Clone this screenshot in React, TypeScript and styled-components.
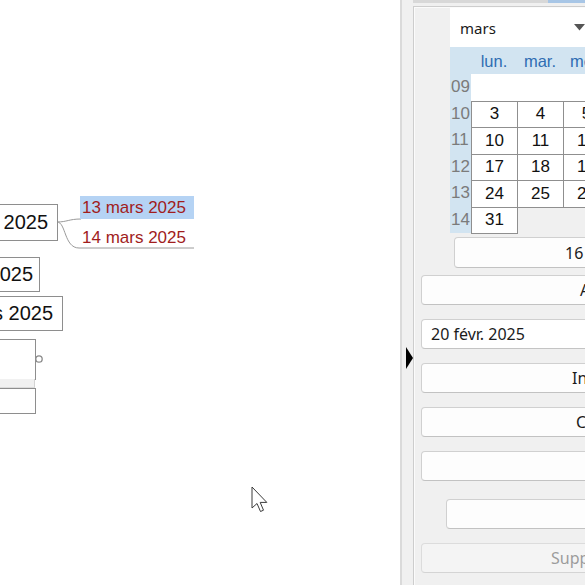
import React from 'react';
import styled, { createGlobalStyle } from 'styled-components';

const Global = createGlobalStyle`
  html, body { margin: 0; padding: 0; width: 585px; height: 585px; overflow: hidden; background: #fff; }
  #root { width: 585px; height: 585px; }
`;

const Page = styled.div`
  display: flex;
  width: 585px;
  height: 585px;
  overflow: hidden;
`;

/* ---------- mind map canvas ---------- */
const Canvas = styled.div`
  position: relative;
  flex: none;
  width: 400px;
  height: 100%;
  background: #fff;
  overflow: hidden;
  font-family: "Liberation Sans", Arial, sans-serif;
`;

const Node = styled.div<{ $right: number; $top: number; $h: number; $pad: number }>`
  position: absolute;
  right: ${p => 400 - p.$right}px;
  top: ${p => p.$top}px;
  height: ${p => p.$h}px;
  box-sizing: border-box;
  min-width: 120px;
  border: 1px solid #8e8e8e;
  background: #fff;
  padding: 0 ${p => p.$pad}px 0 10px;
  display: flex;
  align-items: center;
  justify-content: flex-end;
  font-size: 20px;
  color: #111;
  white-space: nowrap;
`;

const Strip = styled.div`
  position: absolute;
  right: 365px;
  top: 379px;
  width: 80px;
  height: 9px;
  box-sizing: border-box;
  background: #f1f1f1;
  border-right: 1px solid #d4d4d4;
  border-bottom: 1px solid #dcdcdc;
`;

const DateLabel = styled.div<{ $top: number; $selected?: boolean }>`
  position: absolute;
  left: 80px;
  top: ${p => p.$top}px;
  width: 114px;
  height: 23px;
  padding-left: 2px;
  box-sizing: border-box;
  display: flex;
  align-items: center;
  font-size: 17px;
  color: #a11d1d;
  background: ${p => (p.$selected ? '#b5d3f4' : 'transparent')};
  white-space: nowrap;
`;

const Overlay = styled.svg`
  position: absolute;
  left: 0;
  top: 0;
  width: 400px;
  height: 585px;
  pointer-events: none;
`;

const Cursor = styled.svg`
  position: absolute;
  left: 251px;
  top: 486px;
  width: 19px;
  height: 27px;
`;

/* ---------- side panel ---------- */
const Panel = styled.aside`
  position: relative;
  flex: 1;
  background: #f0f0f0;
  border-left: 2px solid #dadada;
  display: flex;
  flex-direction: column;
  overflow: hidden;
  font-family: "Noto Sans", "Open Sans", sans-serif;
`;

const TabStrip = styled.div`
  display: flex;
  height: 3px;
  margin-left: 11px;
  flex: none;
`;

const TabSeg = styled.div<{ $active?: boolean }>`
  height: 100%;
  width: ${p => (p.$active ? 'auto' : '135px')};
  flex: ${p => (p.$active ? 1 : 'none')};
  background: ${p => (p.$active ? '#a8c6e6' : '#d8d8d8')};
`;

const Frame = styled.div`
  margin: 3px 0 0 11px;
  border-left: 1px solid #cdcdcd;
  border-top: 1px solid #cdcdcd;
  box-shadow: inset 1px 1px 0 #fbfbfb;
  padding: 1px 0 0 7px;
  display: flex;
  flex-direction: column;
  flex: 1;
  width: 400px;
`;

const Calendar = styled.div`
  margin-left: 29px;
  display: flex;
  flex-direction: column;
  width: 343px;
`;

const SelectRow = styled.div`
  display: flex;
  height: 39px;
`;

const Select = styled.div<{ $w: number }>`
  width: ${p => p.$w}px;
  height: 100%;
  background: #fff;
  display: flex;
  align-items: center;
  justify-content: space-between;
  padding: 0 1px 0 10px;
  box-sizing: border-box;
  font-size: 15px;
  color: #1a1a1a;
`;

const Grid = styled.div`
  display: grid;
  grid-template-columns: 21px repeat(7, 46px);
  grid-template-rows: 27px repeat(6, 26.5px);
  font-family: "Liberation Sans", Arial, sans-serif;
  font-size: 16px;
`;

const HeadCell = styled.div`
  background: #d2e4f1;
  color: #2f6db3;
  display: flex;
  align-items: center;
  justify-content: center;
  padding-top: 1px;
  font-size: 16.5px;
`;

const WeekCell = styled.div`
  background: #d2e4f1;
  color: #7b7b7b;
  display: flex;
  align-items: center;
  padding-left: 1px;
  font-size: 17px;
`;

const DayCell = styled.div<{ $kind: 'day' | 'lead' | 'trail' }>`
  display: flex;
  align-items: center;
  justify-content: center;
  color: #111;
  font-size: 17px;
  background: ${p => (p.$kind === 'trail' ? 'transparent' : '#fff')};
  border: ${p => (p.$kind === 'day' ? '1px solid #8f8f8f' : 'none')};
  margin: ${p => (p.$kind === 'day' ? '0 -1px -1px 0' : '0')};
  position: relative;
`;

const Button = styled.div<{ $lead: number; $indent?: number; $disabled?: boolean; $h?: number }>`
  flex: none;
  height: ${p => p.$h ?? 30}px;
  margin-left: ${p => p.$indent ?? 0}px;
  width: 360px;
  box-sizing: border-box;
  border: 1px solid ${p => (p.$disabled ? '#dcdcdc' : '#d0d0d0')};
  border-bottom-color: ${p => (p.$disabled ? '#d4d4d4' : '#c2c2c2')};
  border-radius: 4px;
  background: ${p => (p.$disabled ? '#f4f4f4' : '#fdfdfd')};
  color: ${p => (p.$disabled ? '#9c9c9c' : '#1b1b1b')};
  display: flex;
  align-items: center;
  padding-left: ${p => p.$lead}px;
  font-size: 16px;
  white-space: nowrap;
`;

const Field = styled.div`
  flex: none;
  height: 30px;
  width: 360px;
  box-sizing: border-box;
  border: 1px solid #d0d0d0;
  border-bottom-color: #c4c4c4;
  border-radius: 4px;
  background: #fff;
  color: #1b1b1b;
  display: flex;
  align-items: center;
  padding-left: 9px;
  font-size: 16px;
  white-space: nowrap;
`;

const Actions = styled.div`
  display: flex;
  flex-direction: column;
  gap: 14px;
  margin-top: 7px;
`;

const Splitter = styled.div`
  position: absolute;
  left: 4px;
  top: 347px;
  width: 0;
  height: 0;
  border-top: 11.5px solid transparent;
  border-bottom: 11.5px solid transparent;
  border-left: 7px solid #000;
`;

const dayNames = ['lun.', 'mar.', 'mer.', 'jeu.', 'ven.', 'sam.', 'dim.'];
const weeks: { n: string; days: (number | null)[] }[] = [
  { n: '09', days: [null, null, null, null, null, 1, 2] },
  { n: '10', days: [3, 4, 5, 6, 7, 8, 9] },
  { n: '11', days: [10, 11, 12, 13, 14, 15, 16] },
  { n: '12', days: [17, 18, 19, 20, 21, 22, 23] },
  { n: '13', days: [24, 25, 26, 27, 28, 29, 30] },
  { n: '14', days: [31, null, null, null, null, null, null] },
];

export default function App() {
  return (
    <>
      <Global />
      <Page>
        <Canvas>
          <Overlay viewBox="0 0 400 585">
            <path d="M57 222 C67 222 69 219 81 219" fill="none" stroke="#9a9a9a" strokeWidth="1" />
            <path d="M57 222 C66 222 64 248 79 248 L194 248" fill="none" stroke="#9a9a9a" strokeWidth="1" />
            <circle cx="39" cy="359" r="3.2" fill="#fff" stroke="#8a8a8a" strokeWidth="1.3" />
          </Overlay>
          <Node $right={58} $top={204} $h={37} $pad={9}>12 mars 2025</Node>
          <Node $right={40} $top={257} $h={35} $pad={6}>11 mars 2025</Node>
          <Node $right={63} $top={296} $h={35} $pad={9}>10 mars 2025</Node>
          <Node $right={36} $top={339} $h={41} $pad={8} />
          <Strip />
          <Node $right={36} $top={388} $h={26} $pad={8} />
          <DateLabel $top={196} $selected>13 mars 2025</DateLabel>
          <DateLabel $top={226}>14 mars 2025</DateLabel>
          <Cursor viewBox="0 0 19 27">
            <path
              d="M1 1 L1 22 L6 17.5 L9.5 25.5 L12.5 24.2 L9.2 16.4 L15.8 16.4 Z"
              fill="#fff"
              stroke="#3a3a3a"
              strokeWidth="1"
              strokeLinejoin="round"
            />
          </Cursor>
        </Canvas>
        <Panel>
          <TabStrip>
            <TabSeg />
            <TabSeg $active />
          </TabStrip>
          <Frame>
            <Calendar>
              <SelectRow>
                <Select $w={136}>
                  <span>mars</span>
                  <svg width="11" height="7" viewBox="0 0 11 7">
                    <path d="M0 0 L11 0 L5.5 6.5 Z" fill="#555" />
                  </svg>
                </Select>
                <Select $w={120}>2025</Select>
              </SelectRow>
              <Grid>
                <HeadCell />
                {dayNames.map(d => (
                  <HeadCell key={d}>{d}</HeadCell>
                ))}
                {weeks.map((w, wi) => (
                  <React.Fragment key={w.n}>
                    <WeekCell>{w.n}</WeekCell>
                    {w.days.map((d, i) => (
                      <DayCell key={i} $kind={d !== null ? 'day' : wi === 0 ? 'lead' : 'trail'}>
                        {d}
                      </DayCell>
                    ))}
                  </React.Fragment>
                ))}
              </Grid>
              <Button $lead={110} $indent={4} $h={31} style={{ marginTop: 4 }}>
                16 mars 2025
              </Button>
            </Calendar>
            <Actions>
              <Button $lead={158}>Aujourd'hui</Button>
              <Field>20 févr. 2025</Field>
              <Button $lead={150}>Insérer</Button>
              <Button $lead={154}>Copier</Button>
              <Button $lead={150} />
              <Button $lead={150} $indent={25} style={{ marginTop: 4 }} />
              <Button $lead={129} $disabled>
                Supprimer
              </Button>
            </Actions>
          </Frame>
          <Splitter />
        </Panel>
      </Page>
    </>
  );
}
